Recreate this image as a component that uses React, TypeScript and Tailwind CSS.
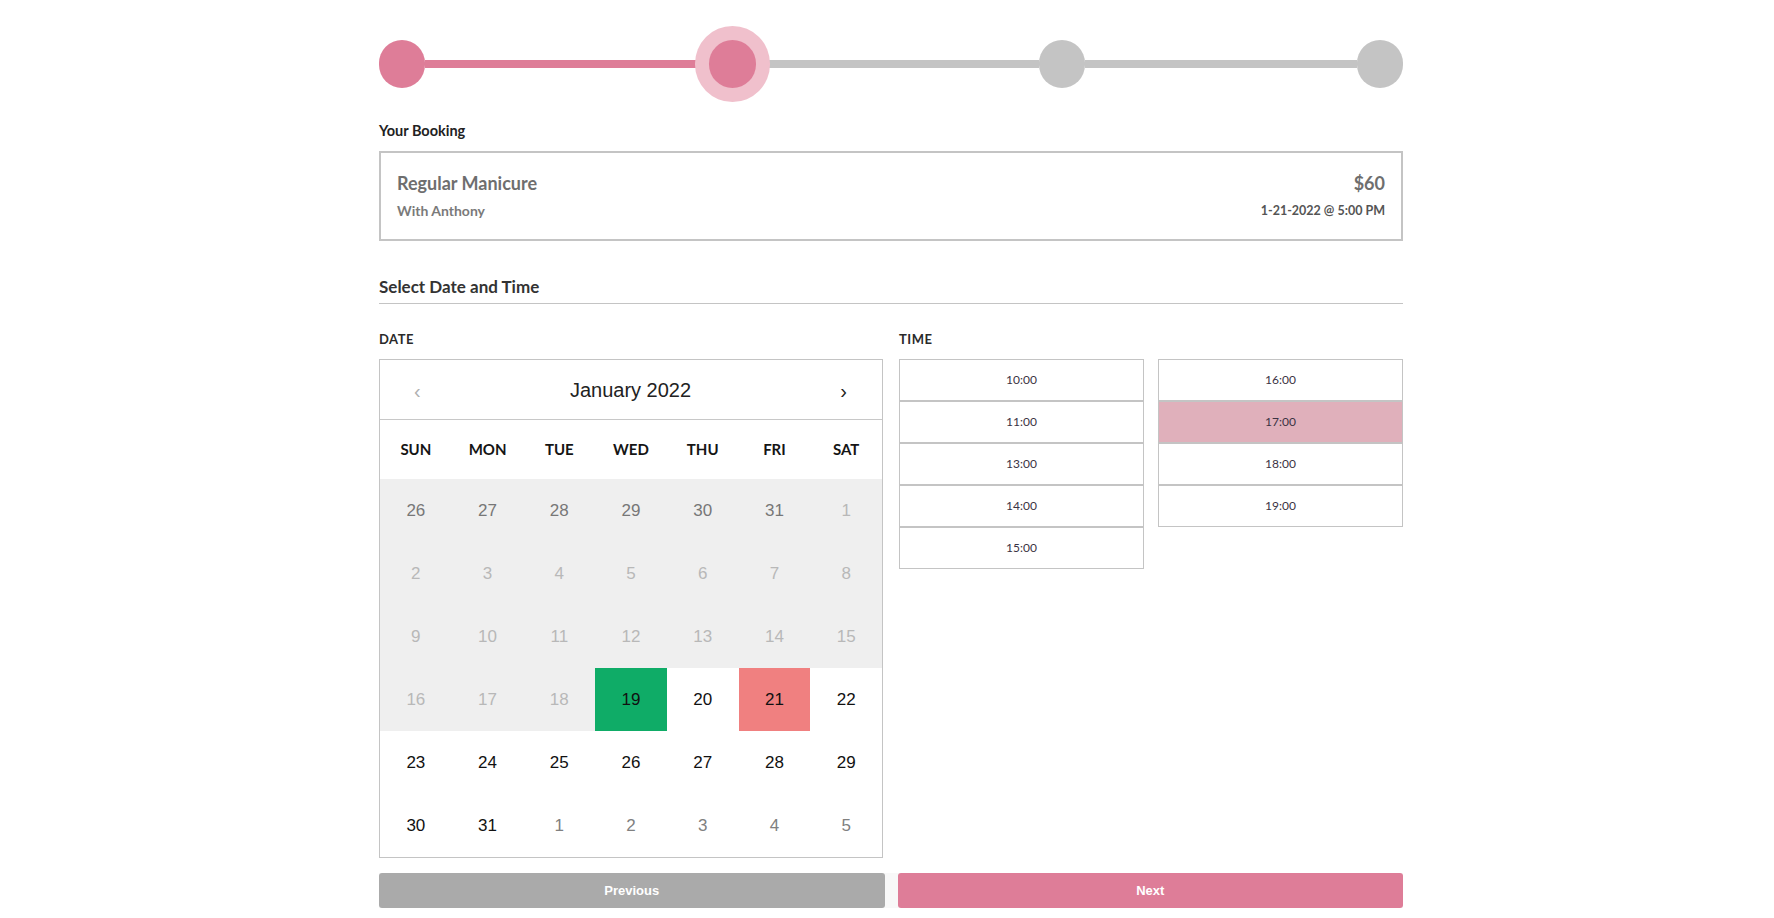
import type { ReactNode } from "react";

const lato = "font-['Lato','Open_Sans',sans-serif]";
const arial = "font-['Liberation_Sans',Arial,sans-serif]";

type Day = { n: number; tone: "prev" | "off" | "on" | "next"; mark?: "today" | "picked" };

// 6 weeks of January 2022, Sunday first
const weeks: Day[][] = [
  [
    { n: 26, tone: "prev" },
    { n: 27, tone: "prev" },
    { n: 28, tone: "prev" },
    { n: 29, tone: "prev" },
    { n: 30, tone: "prev" },
    { n: 31, tone: "prev" },
    { n: 1, tone: "off" },
  ],
  [2, 3, 4, 5, 6, 7, 8].map((n) => ({ n, tone: "off" as const })),
  [9, 10, 11, 12, 13, 14, 15].map((n) => ({ n, tone: "off" as const })),
  [
    { n: 16, tone: "off" },
    { n: 17, tone: "off" },
    { n: 18, tone: "off" },
    { n: 19, tone: "on", mark: "today" },
    { n: 20, tone: "on" },
    { n: 21, tone: "on", mark: "picked" },
    { n: 22, tone: "on" },
  ],
  [23, 24, 25, 26, 27, 28, 29].map((n) => ({ n, tone: "on" as const })),
  [
    { n: 30, tone: "on" },
    { n: 31, tone: "on" },
    ...[1, 2, 3, 4, 5].map((n) => ({ n, tone: "next" as const })),
  ],
];

const weekdays = ["SUN", "MON", "TUE", "WED", "THU", "FRI", "SAT"];

function Dot({ done }: { done: boolean }) {
  return (
    <div className={`h-[48px] w-[46px] shrink-0 rounded-full ${done ? "bg-[#de7d98]" : "bg-[#c4c4c4]"}`} />
  );
}

function Stepper() {
  return (
    <div className="flex h-[48px] items-center">
      <Dot done />
      <div className="h-[8px] w-[284px] bg-[#de7d98]" />
      {/* current step: pale ring painted over the connecting lines */}
      <div className="relative z-10 h-[48px] w-[47px] shrink-0 rounded-full bg-[#de7d98] shadow-[0_0_0_14px_#f0c0cc]" />
      <div className="h-[8px] w-[283px] bg-[#c4c4c4]" />
      <Dot done={false} />
      <div className="h-[8px] flex-1 bg-[#c4c4c4]" />
      <Dot done={false} />
    </div>
  );
}

function Label({ children }: { children: ReactNode }) {
  return (
    <div className={`${lato} text-[13px] font-bold leading-[18px] tracking-[0.04em] text-[#2a2a2a]`}>{children}</div>
  );
}

function Calendar() {
  return (
    <div className="border border-[#c4c4c4] bg-white">
      <div className={`${arial} flex h-[60px] items-center justify-between border-b border-[#c8c8c8] pl-[34px] pr-[35px]`}>
        <span className="pt-[2px] text-[20px] text-[#b0b0b0]">‹</span>
        <span className="text-[20px] text-[#222]">January 2022</span>
        <span className="pt-[2px] text-[20px] text-[#222]">›</span>
      </div>
      <div className="grid h-[59px] grid-cols-7 items-center">
        {weekdays.map((d) => (
          <div key={d} className={`${lato} text-center text-[15px] font-bold text-[#151515]`}>
            {d}
          </div>
        ))}
      </div>
      {weeks.map((week, i) => (
        <div key={i} className="grid grid-cols-7">
          {week.map((day, j) => {
            const bg =
              day.mark === "today"
                ? "bg-[#0fac67]"
                : day.mark === "picked"
                  ? "bg-[#f08080]"
                  : day.tone === "prev" || day.tone === "off"
                    ? "bg-[#efefef]"
                    : "bg-white";
            const fg =
              day.mark
                ? "text-[#111]"
                : day.tone === "prev"
                  ? "text-[#777]"
                  : day.tone === "off"
                    ? "text-[#b8b8b8]"
                    : day.tone === "next"
                      ? "text-[#808080]"
                      : "text-[#111]";
            return (
              <div key={j} className={`${arial} ${bg} ${fg} flex h-[63px] items-center justify-center text-[17px]`}>
                {day.n}
              </div>
            );
          })}
        </div>
      ))}
    </div>
  );
}

const leftSlots = ["10:00", "11:00", "13:00", "14:00", "15:00"];
const rightSlots = ["16:00", "17:00", "18:00", "19:00"];

function Slot({ time, selected }: { time: string; selected?: boolean }) {
  return (
    <div
      className={`${lato} flex h-[42px] items-center justify-center border border-[#c4c4c4] text-[12px] text-[#3b3344] ${
        selected ? "bg-[#e0b0bb]" : "bg-white"
      }`}
    >
      {time}
    </div>
  );
}

export default function App() {
  return (
    <div className="min-h-[918px] bg-white">
      <div className="ml-[379px] w-[1024px] pt-[40px]">
        <Stepper />

        <div className={`${lato} mt-[33px] text-[14.5px] font-bold leading-[20px] text-[#222]`}>Your Booking</div>
        <div className="mt-[10px] flex h-[90px] items-center justify-between border-2 border-[#c4c4c4] px-[16px]">
          <div className={lato}>
            <div className="text-[18px] font-bold leading-[22px] text-[#6e6e6e]">Regular Manicure</div>
            <div className="mt-[8px] text-[14px] font-bold leading-[18px] text-[#7a7a7a]">With Anthony</div>
          </div>
          <div className={`${lato} text-right`}>
            <div className="text-[18px] font-bold leading-[22px] text-[#6e6e6e]">$60</div>
            <div className="mt-[8px] text-[12.5px] font-bold leading-[18px] text-[#555]">1-21-2022 @ 5:00 PM</div>
          </div>
        </div>

        <div
          className={`${lato} mt-[35px] border-b border-[#c4c4c4] pb-[5px] text-[17px] font-bold leading-[22px] text-[#333]`}
        >
          Select Date and Time
        </div>

        <div className="mt-[26px] grid grid-cols-2 gap-[16px]">
          <div>
            <Label>DATE</Label>
            <div className="mt-[11px]">
              <Calendar />
            </div>
          </div>
          <div>
            <Label>TIME</Label>
            <div className="mt-[11px] grid grid-cols-2 items-start gap-[14px]">
              <div className="flex flex-col">
                {leftSlots.map((t) => (
                  <Slot key={t} time={t} />
                ))}
              </div>
              <div className="flex flex-col">
                {rightSlots.map((t) => (
                  <Slot key={t} time={t} selected={t === "17:00"} />
                ))}
              </div>
            </div>
          </div>
        </div>

        <div className="mt-[15px] grid grid-cols-2 gap-[13px] bg-[#f8f8f8]">
          <button
            className={`${arial} h-[35px] rounded-[3px] bg-[#aaaaaa] text-[13px] font-bold text-white`}
          >
            Previous
          </button>
          <button
            className={`${arial} h-[35px] rounded-[3px] bg-[#de7d98] text-[13px] font-bold text-white`}
          >
            Next
          </button>
        </div>
      </div>
    </div>
  );
}
